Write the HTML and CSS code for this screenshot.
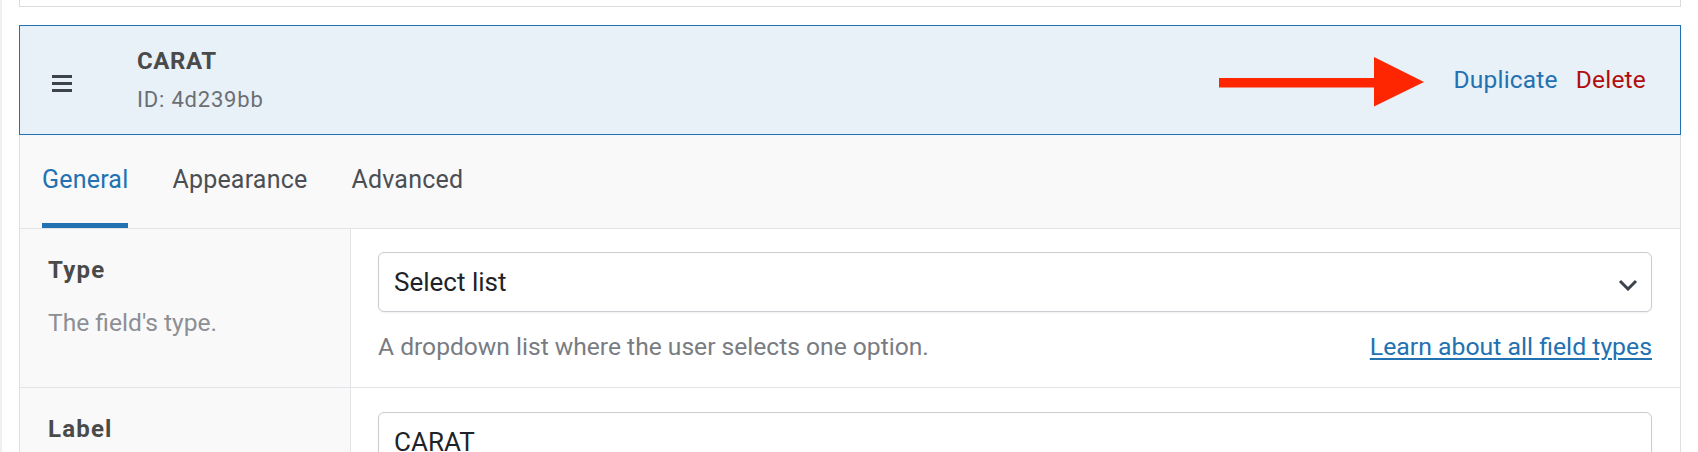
FILE: index.html
```html
<!DOCTYPE html>
<html lang="en">
<head>
<meta charset="utf-8">
<title>Field settings</title>
<link rel="stylesheet" href="styles.css">
</head>
<body>
<div class="layout">
  <div class="edge"></div>
  <div class="main">
    <div class="prev-card"></div>
    <div class="field">
      <div class="field-head">
        <span class="handle">
          <svg width="20" height="17" viewBox="0 0 20 17"><rect x="0" y="0" width="20" height="3" fill="#3c434a"/><rect x="0" y="7" width="20" height="3" fill="#3c434a"/><rect x="0" y="14" width="20" height="3" fill="#3c434a"/></svg>
        </span>
        <div class="title">
          <div class="name">CARAT</div>
          <div class="fid">ID: 4d239bb</div>
        </div>
        <div class="actions">
          <a class="dup">Duplicate</a>
          <a class="del">Delete</a>
        </div>
        <svg class="arrow" width="206" height="50" viewBox="0 0 206 50"><rect x="0" y="21" width="157" height="9.5" fill="#fe2600"/><polygon points="155,0 205,25 155,49.5" fill="#fe2600"/></svg>
      </div>
      <div class="field-body">
        <div class="tabs">
          <a class="tab active">General</a>
          <a class="tab">Appearance</a>
          <a class="tab">Advanced</a>
        </div>
        <div class="row">
          <div class="row-label">
            <div class="lbl">Type</div>
            <div class="hint">The field's type.</div>
          </div>
          <div class="row-input">
            <div class="select">
              <span>Select list</span>
              <svg class="chev" width="20" height="12" viewBox="0 0 20 12"><polyline points="2,2 10,10 18,2" fill="none" stroke="#3c434a" stroke-width="3"/></svg>
            </div>
            <div class="desc-line">
              <span class="desc">A dropdown list where the user selects one option.</span>
              <a class="learn">Learn about all field types</a>
            </div>
          </div>
        </div>
        <div class="row row2">
          <div class="row-label">
            <div class="lbl">Label</div>
          </div>
          <div class="row-input">
            <div class="select input"><span>CARAT</span></div>
          </div>
        </div>
      </div>
    </div>
  </div>
</div>
</body>
</html>
```
FILE: styles.css
```css
html, body {
  margin: 0;
  padding: 0;
  background: #ffffff;
  height: 452px;
  overflow: hidden;
  font-family: Roboto, "Liberation Sans", sans-serif;
}

.layout {
  display: flex;
  min-height: 452px;
}

.edge {
  width: 2px;
  background: #f0f0f1;
  flex: none;
}

.main {
  flex: 1;
  padding: 0 17px;
}

.prev-card {
  height: 6px;
  background: #ffffff;
  border: 1px solid #dcdcde;
  border-top: none;
  margin-bottom: 18px;
}

.field-head {
  position: relative;
  display: flex;
  align-items: center;
  height: 108px;
  background: #e8f0f8;
  border: 1px solid #2271b1;
  padding: 0 34px 0 32px;
}

.handle {
  display: flex;
  margin-top: 6px;
}

.title {
  display: flex;
  flex-direction: column;
  gap: 11px;
  margin-left: 65px;
}

.name {
  font-size: 24px;
  line-height: 28px;
  font-weight: 700;
  color: #4a4a4a;
  letter-spacing: 0.6px;
}

.fid {
  font-size: 22px;
  line-height: 28px;
  color: #6b6f73;
  letter-spacing: 0.8px;
}

.actions {
  margin-left: auto;
  display: flex;
  gap: 18px;
  font-size: 24.5px;
  line-height: 28px;
  letter-spacing: 0.2px;
}

.dup { color: #2271b1; }
.del { color: #b20d0d; }

.arrow {
  position: absolute;
  left: 1199px;
  top: 31px;
}

.field-body {
  background: #f9f9f9;
  border: 1px solid #e0e0e0;
  border-top: none;
}

.tabs {
  display: flex;
  gap: 44px;
  padding-left: 22px;
  border-bottom: 1px solid #e2e4e7;
}

.tab {
  display: block;
  padding: 30px 0 28px;
  line-height: 30px;
  font-size: 25px;
  color: #4b4f54;
  border-bottom: 5px solid transparent;
  letter-spacing: 0.2px;
}

.tab.active {
  color: #2271b1;
  border-bottom-color: #2271b1;
}

.row {
  display: grid;
  grid-template-columns: 331px 1fr;
  border-bottom: 1px solid #e2e4e7;
}

.row-label {
  padding: 27px 28px 0 28px;
  border-right: 1px solid #e2e4e7;
}

.lbl {
  font-size: 24px;
  line-height: 28px;
  font-weight: 700;
  color: #4a4a4a;
  letter-spacing: 1.2px;
}

.hint {
  margin-top: 25px;
  font-size: 24.6px;
  line-height: 28px;
  color: #8c8f94;
}

.row-input {
  background: #ffffff;
  padding: 23px 28px 26px 27px;
}

.select {
  box-sizing: border-box;
  height: 60px;
  border: 1px solid #c9ccd1;
  border-radius: 6px;
  background: #ffffff;
  box-shadow: 0 1px 2px rgba(0, 0, 0, 0.06);
  display: flex;
  align-items: center;
  justify-content: space-between;
  padding: 0 13px 0 15px;
  font-size: 26px;
  color: #1d2327;
}

.chev {
  margin-top: 6px;
}

.desc-line {
  margin-top: 21px;
  display: flex;
  justify-content: space-between;
  font-size: 24.6px;
  line-height: 28px;
}

.desc { color: #787c82; }

.learn {
  color: #2271b1;
  text-decoration: underline;
  text-underline-offset: 3px;
  text-decoration-thickness: 2px;
  font-size: 24.8px;
}

.row2 .row-label { padding-top: 27px; }
.row2 .row-input { padding-top: 24px; }
```
